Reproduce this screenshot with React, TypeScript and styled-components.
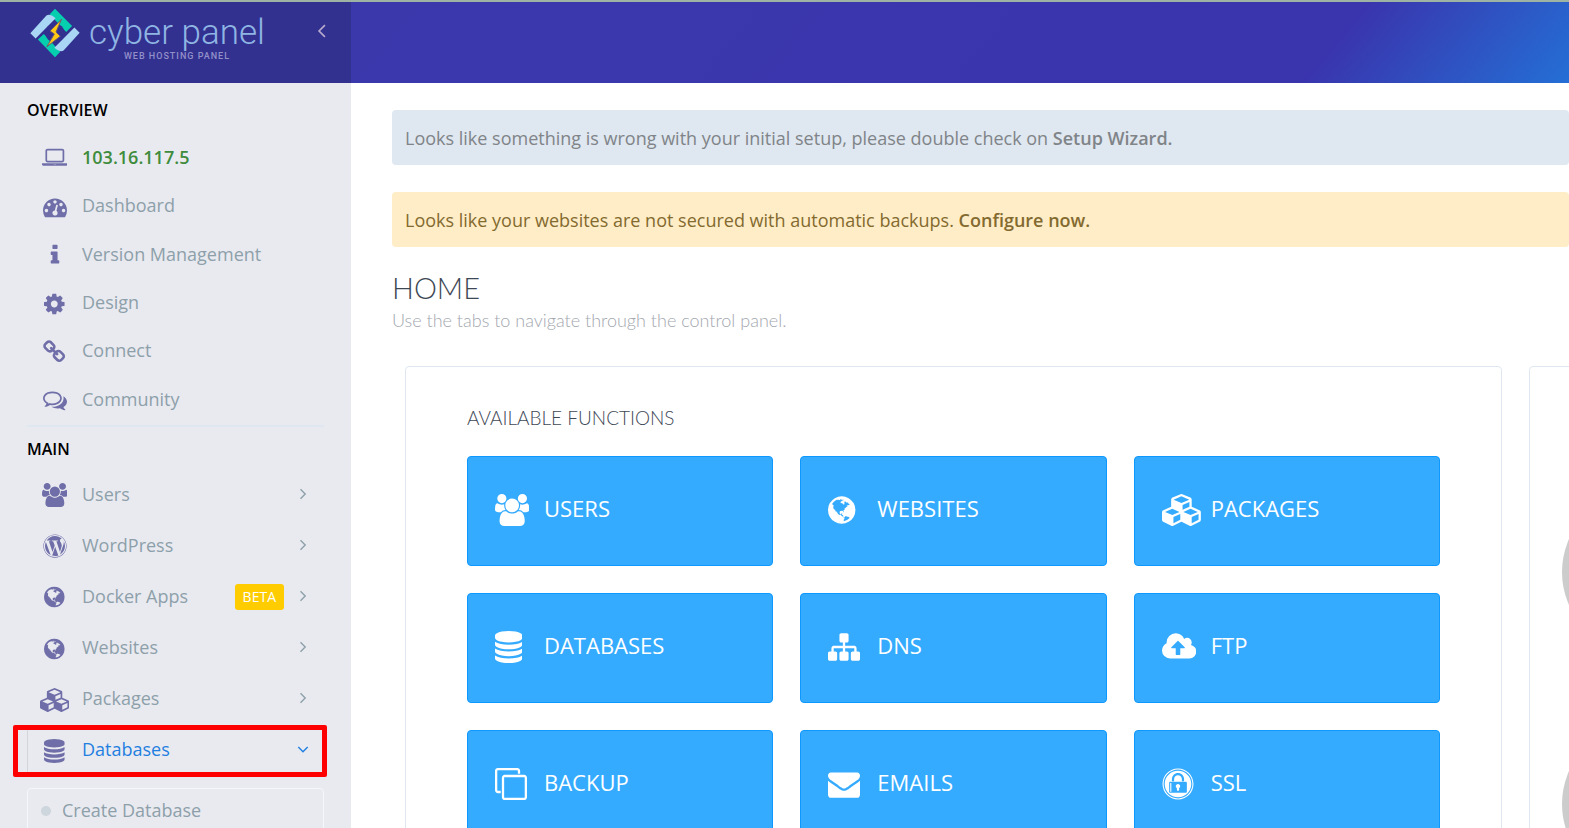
import React from "react";
import styled, { createGlobalStyle } from "styled-components";
import { FaWordpress, FaExpeditedssl } from "react-icons/fa";

const GlobalStyle = createGlobalStyle`
  * { box-sizing: border-box; }
  body {
    margin: 0;
    background: #fff;
    font-family: "Open Sans", "Noto Sans", sans-serif;
    font-size: 18px;
    color: #8da0aa;
    overflow: hidden;
  }
  ul, h1, h2, h3, p { margin: 0; padding: 0; font-weight: 400; }
  ul { list-style: none; }
  a { color: inherit; text-decoration: none; }
`;

type Shape = { box: string; d: string };

const shapes: Record<string, Shape> = {
  laptop: {
    box: "0 0 1920 1792",
    d: "M416 1152q-66 0-113-47t-47-113v-704q0-66 47-113t113-47h1088q66 0 113 47t47 113v704q0 66-47 113t-113 47h-1088zm-32-864v704q0 13 9.5 22.5t22.5 9.5h1088q13 0 22.5-9.5t9.5-22.5v-704q0-13-9.5-22.5t-22.5-9.5h-1088q-13 0-22.5 9.5t-9.5 22.5zm1376 928h160v96q0 40-47 68t-113 28h-1600q-66 0-113-28t-47-68v-96h1760zm-720 96q16 0 16-16t-16-16h-160q-16 0-16 16t16 16h160z",
  },
  dashboard: {
    box: "0 0 1792 1792",
    d: "M384 1152q0-53-37.5-90.5t-90.5-37.5-90.5 37.5-37.5 90.5 37.5 90.5 90.5 37.5 90.5-37.5 37.5-90.5zm192-448q0-53-37.5-90.5t-90.5-37.5-90.5 37.5-37.5 90.5 37.5 90.5 90.5 37.5 90.5-37.5 37.5-90.5zm428 481l101-382q6-26-7.5-48.5t-38.5-29.5-48 6.5-30 39.5l-101 382q-60 5-107 43.5t-63 98.5q-20 77 20 146t117 89 146-20 89-117q16-60-6-117t-72-91zm660-33q0-53-37.5-90.5t-90.5-37.5-90.5 37.5-37.5 90.5 37.5 90.5 90.5 37.5 90.5-37.5 37.5-90.5zm-640-640q0-53-37.5-90.5t-90.5-37.5-90.5 37.5-37.5 90.5 37.5 90.5 90.5 37.5 90.5-37.5 37.5-90.5zm448 192q0-53-37.5-90.5t-90.5-37.5-90.5 37.5-37.5 90.5 37.5 90.5 90.5 37.5 90.5-37.5 37.5-90.5zm320 448q0 261-141 483-19 29-54 29h-1402q-35 0-54-29-141-221-141-483 0-182 71-348t191-286 286-191 348-71 348 71 286 191 191 286 71 348z",
  },
  info: {
    box: "0 0 1792 1792",
    d: "M1216 1344v128q0 26-19 45t-45 19h-512q-26 0-45-19t-19-45v-128q0-26 19-45t45-19h64v-384h-64q-26 0-45-19t-19-45v-128q0-26 19-45t45-19h384q26 0 45 19t19 45v576h64q26 0 45 19t19 45zm-128-1152v192q0 26-19 45t-45 19h-256q-26 0-45-19t-19-45v-192q0-26 19-45t45-19h256q26 0 45 19t19 45z",
  },
  cog: {
    box: "128 0 1536 1792",
    d: "M1152 896q0-106-75-181t-181-75-181 75-75 181 75 181 181 75 181-75 75-181zm512-109v222q0 12-8 23t-20 13l-185 28q-19 54-39 91 35 50 107 138 10 12 10 25t-9 23q-27 37-99 108t-94 71q-12 0-26-9l-138-108q-44 23-91 38-16 136-29 186-7 28-36 28h-222q-14 0-24.5-8.5t-11.5-21.5l-28-184q-49-16-90-37l-141 107q-10 9-25 9-14 0-25-11-126-114-165-168-7-10-7-23 0-12 8-23 15-21 51-66.5t54-70.5q-27-50-41-99l-183-27q-13-2-21-12.5t-8-23.5v-222q0-12 8-23t19-13l186-28q14-46 39-92-40-57-107-138-10-12-10-24 0-10 9-23 26-36 98.5-107.5t94.5-71.5q13 0 26 10l138 107q44-23 91-38 16-136 29-186 7-28 36-28h222q14 0 24.5 8.5t11.5 21.5l28 184q49 16 90 37l142-107q9-9 24-9 13 0 25 10 129 119 165 170 7 8 7 22 0 12-8 23-15 21-51 66.5t-54 70.5q26 50 41 98l183 28q13 2 21 12.5t8 23.5z",
  },
  link: {
    box: "64 0 1664 1792",
    d: "M1520 1216q0-40-28-68l-208-208q-28-28-68-28-42 0-72 32 3 3 19 18.5t21.5 21.5 15 19 13 25.5 3.5 27.5q0 40-28 68t-68 28q-15 0-27.5-3.5t-25.5-13-19-15-21.5-21.5-18.5-19q-33 31-33 73 0 40 28 68l206 207q27 27 68 27 40 0 68-26l147-146q28-28 28-67zm-703-705q0-40-28-68l-206-207q-28-28-68-28-39 0-68 27l-147 146q-28 28-28 67 0 40 28 68l208 208q27 27 68 27 42 0 72-31-3-3-19-18.5t-21.5-21.5-15-19-13-25.5-3.5-27.5q0-40 28-68t68-28q15 0 27.5 3.5t25.5 13 19 15 21.5 21.5 18.5 19q33-31 33-73zm895 705q0 120-85 203l-147 146q-83 83-203 83-121 0-204-85l-206-207q-83-83-83-203 0-123 88-209l-88-88q-86 88-208 88-120 0-204-84l-208-208q-84-84-84-204t85-203l147-146q83-83 203-83 121 0 204 85l206 207q83 83 83 203 0 123-88 209l88 88q86-88 208-88 120 0 204 84l208 208q84 84 84 204z",
  },
  comments: {
    box: "0 0 1792 1792",
    d: "M704 384q-153 0-286 52t-211.5 141-78.5 191q0 82 53 158t149 132l97 56-35 84q34-20 62-39l44-31 53 10q78 14 153 14 153 0 286-52t211.5-141 78.5-191-78.5-191-211.5-141-286-52zm0-128q191 0 353.5 68.5t256.5 186.5 94 257-94 257-256.5 186.5-353.5 68.5q-86 0-176-16-124 88-278 128-36 9-86 16h-3q-11 0-20.5-8t-11.5-21q-1-3-1-6.5t.5-6.5 2-6l2.5-5 3.5-5.5 4-5 4.5-5 4-4.5q5-6 23-25t26-29.5 22.5-29 25-38.5 20.5-44q-124-72-195-177t-71-224q0-139 94-257t256.5-186.5 353.5-68.5zm822 1169q10 24 20.5 44t25 38.5 22.5 29 26 29.5 23 25q1 1 4 4.5t4.5 5 4 5 3.5 5.5l2.5 5 2 6 .5 6.5-1 6.5q-3 14-13 22t-22 7q-50-7-86-16-154-40-278-128-90 16-176 16-271 0-472-132 58 4 88 4 161 0 309-45t264-129q125-92 192-212t67-254q0-77-23-152 129 71 204 178t75 230q0 120-71 224.5t-195 176.5z",
  },
  users: {
    box: "64 0 1920 1792",
    d: "M657 896q-162 5-265 128h-134q-82 0-138-40.5t-56-118.5q0-353 124-353 6 0 43.5 21t97.5 42.5 119 21.5q67 0 133-23-5 37-5 66 0 139 81 256zm1071 637q0 120-73 189.5t-194 69.5h-874q-121 0-194-69.5t-73-189.5q0-53 3.5-103.5t14-109 26.5-108.5 43-97.5 62-81 85.5-53.5 111.5-20q10 0 43 21.5t73 48 107 48 135 21.5 135-21.5 107-48 73-48 43-21.5q61 0 111.5 20t85.5 53.5 62 81 43 97.5 26.5 108.5 14 109 3.5 103.5zm-1024-1277q0 106-75 181t-181 75-181-75-75-181 75-181 181-75 181 75 75 181zm704 384q0 159-112.5 271.5t-271.5 112.5-271.5-112.5-112.5-271.5 112.5-271.5 271.5-112.5 271.5 112.5 112.5 271.5zm576 225q0 78-56 118.5t-138 40.5h-134q-103-123-265-128 81-117 81-256 0-29-5-66 66 23 133 23 59 0 119-21.5t97.5-42.5 43.5-21q124 0 124 353zm-128-609q0 106-75 181t-181 75-181-75-75-181 75-181 181-75 181 75 75 181z",
  },
  globe: {
    box: "128 0 1536 1792",
    d: "M896 128q209 0 385.5 103t279.5 279.5 103 385.5-103 385.5-279.5 279.5-385.5 103-385.5-103-279.5-279.5-103-385.5 103-385.5 279.5-279.5 385.5-103zm274 521q-2 1-9.5 9.5t-13.5 9.5q2 0 4.5-5t5-11 3.5-7q6-7 22-15 14-6 52-12 34-8 51 11-2-2 9.5-13t14.5-12q3-2 15-4.5t15-7.5l2-22q-12 1-17.5-7t-6.5-21q0 2-6 8 0-7-4.5-8t-11.5 1-9 1q-10-3-15-7.5t-8-16.5-4-15q-2-5-9.5-11t-9.5-10q-1-2-2.5-5.5t-3-6.5-4-5.5-5.5-2.5-7 5-7.5 10-4.5 5q-3-2-6-1.5t-4.5 1-4.5 3-5 3.5q-3 2-8.5 3t-8.5 2q15-5-1-11-10-4-16-3 9-4 7.5-12t-8.5-14h5q-1-4-8.5-8.5t-17.5-8.5-13-6q-8-5-34-9.5t-33-.5q-5 6-4.5 10.5t4 14 3.5 12.5q1 6-5.5 13t-6.5 12q0 7 14 15.5t10 21.5q-3 8-16 16t-16 12q-5 8-1.5 18.5t10.5 16.5q2 2 1.5 4t-3.5 4.5-5.5 4-6.5 3.5l-3 2q-11 5-20.5-6t-13.5-26q-7-25-16-30-23-8-29 1-5-13-41-26-25-9-58-4 6-1 0-15-7-15-19-12 3-6 4-17.5t1-13.5q3-13 12-23 1-1 7-8.5t9.5-13.5.5-6q35 4 50-11 5-5 11.5-17t10.5-17q9-6 14-5.5t14.5 5.5 14.5 5q14 1 15.5-11t-7.5-20q12 1 3-17-4-7-8-9-12-4-27 5-8 4 2 8-1-1-9.5 10.5t-16.5 17.5-16-5q-1-1-5.5-13.5t-9.5-13.5q-8 0-16 15 3-8-11-15t-24-8q19-12-8-27-7-4-20.5-5t-19.5 4q-5 7-5.5 11.5t5 8 10.5 5.5 11.5 4 8.5 3q14 10 8 14-2 1-8.5 3.5t-11.5 4.5-6 4q-3 4 0 14t-2 14q-5-5-9-17.5t-7-16.5q7 9-25 6l-10-1q-4 0-16 2t-20.5 1-13.5-8q-4-8 0-20 1-4 4-2-4-3-11-9.5t-10-8.5q-46 15-94 41 6 1 12-1 5-2 13-6.5t10-5.5q34-14 42-7l5-5q14 16 20 25-7-4-30-1-20 6-22 12 7 12 5 18-4-3-11.5-10t-14.5-11-15-5q-16 0-22 1-146 80-235 222 7 7 12 8 4 1 5 9t2.5 11 11.5-3q9 8 3 19 1-1 44 27 19 17 21 21 3 11-10 18-1-2-9-9t-9-4q-3 5 .5 18.5t10.5 12.5q-7 0-9.5 16t-2.5 35.5-1 23.5l2 1q-3 12 5.5 34.5t21.5 19.5q-13 3 20 43 6 8 8 9 3 2 12 7.5t15 10 10 10.5q4 5 10 22.5t14 23.5q-2 6 9.5 20t10.5 23q-1 0-2.5 1t-2.5 1q3 7 15.5 14t15.5 13q1 3 2 10t3 11 8 2q2-20-24-62-15-25-17-29-3-5-5.5-15.5t-4.5-14.5q2 0 6 1.5t8.5 3.5 7.5 4 2 3q-3 7 2 17.5t12 18.5 17 19 12 13q6 6 14 19.5t0 13.5q9 0 20 10t17 20q5 8 8 26t5 24q2 7 8.5 13.5t12.5 9.5l16 8 13 7q5 2 18.5 10.5t21.5 11.5q10 4 16 4t14.5-2.5 13.5-3.5q15-2 29 15t21 21q36 19 55 11-2 1 .5 7.5t8 15.5 9 14.5 5.5 8.5q5 6 18 15t18 15q6-4 7-9-3 8 7 20t18 10q14-3 14-32-31 15-49-18 0-1-2.5-5.5t-4-8.5-2.5-8.5 0-7.5 5-3q9 0 10-3.5t-2-12.5-4-13q-1-8-11-20t-12-15q-5 9-16 8t-16-9q0 1-1.5 5.5t-1.5 6.5q-13 0-15-1 1-3 2.5-17.5t3.5-22.5q1-4 5.5-12t7.5-14.5 4-12.5-4.5-9.5-17.5-2.5q-19 1-26 20-1 3-3 10.5t-5 11.5-9 7q-7 3-24 2t-24-5q-13-8-22.5-29t-9.5-37q0-10 2.5-26.5t3-25-5.5-24.5q3-2 9-9.5t10-10.5q2-1 4.5-1.5t4.5 0 4-1.5 3-6q-1-1-4-3-3-3-4-3 7 3 28.5-1.5t27.5 1.5q15 11 22-2 0-1-2.5-9.5t-.5-13.5q5 27 29 9 3 3 15.5 5t17.5 5q3 2 7 5.5t5.5 4.5 5-.5 8.5-6.5q10 14 12 24 11 40 19 44 7 3 11 2t4.5-9.5 0-14-1.5-12.5l-1-8v-18l-1-8q-15-3-18.5-12t1.5-18.5 15-18.5q1-1 8-3.5t15.5-6.5 12.5-8q21-19 15-35 7 0 11-9-1 0-5-3t-7.5-5-4.5-2q9-5 2-16 5-3 7.5-11t7.5-10q9 12 21 2 8-8 1-16 5-7 20.5-10.5t18.5-9.5q7 2 8-2t1-12 3-12q4-5 15-9t13-5l17-11q3-4 0-4 18 2 31-11 10-11-6-20 3-6-3-9.5t-15-5.5q3-1 11.5-.5t10.5-1.5q15-10-7-16-17-5-43 12zm-163 877q206-36 351-189-3-3-12.5-4.5t-12.5-3.5q-18-7-24-8 1-7-2.5-13t-8-9-12.5-8-11-7q-2-2-7-6t-7-5.5-7.5-4.5-8.5-2-10 1l-3 1q-3 1-5.5 2.5t-5.5 3-4 3 0 2.5q-21-17-36-22-5-1-11-5.5t-10.5-7-10-1.5-11.5 7q-5 5-6 15t-2 13q-7-5 0-17.5t2-18.5q-3-6-10.5-4.5t-12 4.5-11.5 8.5-9 6.5-8.5 5.5-8.5 7.5q-3 4-6 12t-5 11q-2-4-11.5-6.5t-9.5-5.5q2 10 4 35t5 38q7 31-12 48-27 25-29 40-4 22 12 26 0 7-8 20.5t-7 21.5q0 6 2 16z",
  },
  cubes: {
    box: "0 0 2176 1792",
    d: "M640 1632l384-192v-314l-384 164v342zm-64-454l404-173-404-173-404 173zm1088 454l384-192v-314l-384 164v342zm-64-454l404-173-404-173-404 173zm-448-293l384-165v-266l-384 164v267zm-64-379l441-189-441-189-441 189zm1088 518v416q0 36-19 67t-52 47l-448 224q-25 14-57 14t-57-14l-448-224q-4-2-7-4-2 2-7 4l-448 224q-25 14-57 14t-57-14l-448-224q-33-16-52-47t-19-67v-416q0-38 21.5-70t56.5-48l434-186v-400q0-38 21.5-70t56.5-48l448-192q23-10 50-10t50 10l448 192q35 16 56.5 48t21.5 70v400l434 186q36 16 57 48t21 70z",
  },
  database: {
    box: "128 0 1536 1792",
    d: "M896 768q237 0 443-43t325-127v170q0 69-103 128t-280 93.5-385 34.5-385-34.5-280-93.5-103-128v-170q119 84 325 127t443 43zm0 768q237 0 443-43t325-127v170q0 69-103 128t-280 93.5-385 34.5-385-34.5-280-93.5-103-128v-170q119 84 325 127t443 43zm0-384q237 0 443-43t325-127v170q0 69-103 128t-280 93.5-385 34.5-385-34.5-280-93.5-103-128v-170q119 84 325 127t443 43zm0-1152q208 0 385 34.5t280 93.5 103 128v128q0 69-103 128t-280 93.5-385 34.5-385-34.5-280-93.5-103-128v-128q0-69 103-128t280-93.5 385-34.5z",
  },
  sitemap: {
    box: "0 0 1792 1792",
    d: "M1792 1248v320q0 40-28 68t-68 28h-320q-40 0-68-28t-28-68v-320q0-40 28-68t68-28h96v-192h-512v192h96q40 0 68 28t28 68v320q0 40-28 68t-68 28h-320q-40 0-68-28t-28-68v-320q0-40 28-68t68-28h96v-192h-512v192h96q40 0 68 28t28 68v320q0 40-28 68t-68 28h-320q-40 0-68-28t-28-68v-320q0-40 28-68t68-28h96v-192q0-52 38-90t90-38h512v-192h-96q-40 0-68-28t-28-68v-320q0-40 28-68t68-28h320q40 0 68 28t28 68v320q0 40-28 68t-68 28h-96v192h512q52 0 90 38t38 90v192h96q40 0 68 28t28 68z",
  },
  cloud: {
    box: "0 0 1920 1792",
    d: "M1280 928q0-14-9-23l-352-352q-9-9-23-9t-23 9l-351 351q-10 12-10 24 0 14 9 23t23 9h224v352q0 13 9.5 22.5t22.5 9.5h192q13 0 22.5-9.5t9.5-22.5v-352h224q13 0 22.5-9.5t9.5-22.5zm640 224q0 159-112.5 271.5t-271.5 112.5h-1088q-185 0-316.5-131.5t-131.5-316.5q0-130 70-240t188-165q-2-30-2-43 0-212 150-362t362-150q156 0 285.5 87t188.5 231q71-62 166-62 106 0 181 75t75 181q0 76-41 138 130 31 213.5 135.5t83.5 238.5z",
  },
  envelope: {
    box: "0 0 1792 1792",
    d: "M1792 710v794q0 66-47 113t-113 47h-1472q-66 0-113-47t-47-113v-794q44 49 101 87 362 246 497 345 57 42 92.5 65.5t94.5 48 110 24.5h2q51 0 110-24.5t94.5-48 92.5-65.5q170-123 498-345 57-39 100-87zm0-294q0 79-49 151t-122 123q-376 261-468 325-10 7-42.5 31t-54 38.5-52 32.5-57.5 27-50 9h-2q-23 0-50-9t-57.5-27-52-32.5-54-38.5-42.5-31q-91-64-262-182.5t-205-142.5q-62-42-117-115.5t-55-136.5q0-78 41.5-130t118.5-52h1472q65 0 112.5 47t47.5 113z",
  },
  clone: {
    box: "0 0 1792 1792",
    d: "M1664 1632v-1088q0-13-9.5-22.5t-22.5-9.5h-1088q-13 0-22.5 9.5t-9.5 22.5v1088q0 13 9.5 22.5t22.5 9.5h1088q13 0 22.5-9.5t9.5-22.5zm128-1088v1088q0 66-47 113t-113 47h-1088q-66 0-113-47t-47-113v-1088q0-66 47-113t113-47h1088q66 0 113 47t47 113zm-384-384v160h-128v-160q0-13-9.5-22.5t-22.5-9.5h-1088q-13 0-22.5 9.5t-9.5 22.5v1088q0 13 9.5 22.5t22.5 9.5h160v128h-160q-66 0-113-47t-47-113v-1088q0-66 47-113t113-47h1088q66 0 113 47t47 113z",
  },
};

function Glyph({ name }: { name: string }) {
  if (name === "wordpress") return <FaWordpress aria-hidden />;
  if (name === "ssl") return <FaExpeditedssl aria-hidden />;
  const s = shapes[name];
  return (
    <svg viewBox={s.box} fill="currentColor" aria-hidden>
      <path d={s.d} />
    </svg>
  );
}

const Page = styled.div`
  display: grid;
  grid-template-columns: 351px minmax(0, 1fr);
  height: 100vh;
  overflow: hidden;
  border-top: 2px solid #9fb3a4;
`;

const Sidebar = styled.aside`
  background: #e9eaf0;
  overflow: hidden;
`;

const Brand = styled.div`
  display: flex;
  align-items: flex-start;
  height: 81px;
  padding: 6px 22px 0 30px;
  background: #323190;
`;

const Logo = styled.a`
  display: flex;
  flex: 1;
  gap: 9px;
  svg { width: 50px; height: 50px; }
`;

const Wordmark = styled.span`
  display: flex;
  flex-direction: column;
  align-items: center;
`;

const BrandName = styled.span`
  height: 44px;
  font: 300 35px/50px Roboto, sans-serif;
  color: #8fb5e3;
`;

const BrandNote = styled.span`
  font: 500 9px/9px Roboto, sans-serif;
  letter-spacing: 1px;
  color: #938fc9;
`;

const Collapse = styled.button`
  display: flex;
  margin-top: 16px;
  padding: 0;
  border: 0;
  background: none;
  color: #b9abce;
`;

const Nav = styled.nav`
  padding: 0 27px;
`;

const NavHeading = styled.h2`
  padding-top: 14px;
  font-size: 16px;
  font-weight: 600;
  line-height: 26px;
  color: #000;
`;

const NavList = styled.ul<{ $height: number }>`
  display: grid;
  grid-auto-rows: 1fr;
  height: ${(p) => p.$height}px;
`;

const OverviewList = styled(NavList)`
  margin-top: 10px;
`;

const MainList = styled(NavList)`
  margin-top: 6px;
`;

const Divider = styled.hr`
  height: 2px;
  margin: 2px 0 -5px;
  border: 0;
  background: #dfe8f1;
`;

const NavLink = styled.a<{ $tone?: "host" | "open" }>`
  display: flex;
  align-items: center;
  height: 100%;
  padding-right: 15px;
  color: ${(p) => (p.$tone === "host" ? "#3f8c3d" : p.$tone === "open" ? "#1f7fe0" : "#8da0aa")};
  font-weight: ${(p) => (p.$tone === "host" ? 600 : 400)};
`;

const NavIcon = styled.span`
  display: flex;
  justify-content: center;
  width: 55px;
  padding-top: 3px;
  color: #6f6ea8;
  svg { height: 24px; width: auto; flex: none; }
`;

const NavText = styled.span`
  flex: 1;
`;

const Badge = styled.span`
  margin: 3px 13px 0 0;
  padding: 0 8px;
  border-radius: 3px;
  background: #fc0;
  color: #fff;
  font-size: 14px;
  line-height: 26px;
`;

const OpenItem = styled.li`
  position: relative;
  border-left: 1px solid #d3d5dd;
  margin: 3px 0;
  ${NavLink} { margin-left: -1px; }
`;

const Highlight = styled.span`
  position: absolute;
  inset: -2px -3px -5px -15px;
  border: 5px solid #f00;
  border-radius: 2px;
  pointer-events: none;
`;

const Submenu = styled.ul`
  margin-top: 13px;
  padding: 0 13px;
  border: 1px solid #f6f7fa;
  border-radius: 4px;
`;

const SubLink = styled.a`
  display: flex;
  align-items: center;
  gap: 11px;
  line-height: 43px;
  &::before {
    content: "";
    width: 10px;
    height: 10px;
    border-radius: 50%;
    background: #cdd5dd;
  }
`;

const Main = styled.div`
  overflow: hidden;
`;

const TopBar = styled.header`
  height: 81px;
  background: linear-gradient(130deg, #3b38ac, #3a34ad 79%, #246fd5);
`;

const Content = styled.main`
  padding: 27px 0 0 41px;
`;

const Alert = styled.p<{ $warn?: boolean }>`
  margin-bottom: 27px;
  padding: 2px 13px 0;
  border-radius: 4px;
  line-height: 53px;
  background: ${(p) => (p.$warn ? "#ffedc7" : "#dfe7f0")};
  color: ${(p) => (p.$warn ? "#836a2f" : "#808488")};
  a { font-weight: 600; }
`;

const Title = styled.h1`
  font: 300 29px/28px Lato, sans-serif;
  color: #3e4855;
`;

const Tagline = styled.p`
  padding-top: 4px;
  font: 300 18px/28px Lato, sans-serif;
  color: #a3a7af;
`;

const Panels = styled.div`
  display: grid;
  grid-template-columns: minmax(0, 1fr) 400px;
  gap: 27px;
  margin: 32px -360px 0 13px;
`;

const Panel = styled.section`
  border: 1px solid #dfe8f1;
  border-radius: 4px;
`;

const FunctionPanel = styled(Panel)`
  padding: 37px 61px;
`;

const GaugePanel = styled(Panel)`
  display: grid;
  align-content: start;
  gap: 70px;
  padding: 124px 32px;
`;

const Gauge = styled.svg`
  width: 162px;
  height: 162px;
`;

const PanelTitle = styled.h3`
  margin-bottom: 24px;
  font: 300 19px/28px Lato, sans-serif;
  color: #3e4855;
`;

const Tiles = styled.div`
  display: grid;
  grid-template-columns: repeat(3, minmax(0, 1fr));
  grid-auto-rows: 110px;
  gap: 27px;
`;

const Tile = styled.a`
  display: flex;
  align-items: center;
  padding: 0 27px 6px;
  border: 1px solid #0e97ff;
  border-radius: 4px;
  background: #35abff;
  color: #fff;
  font-size: 22px;
`;

const TileIcon = styled.span`
  display: flex;
  width: 49px;
  padding-top: 4px;
  svg { height: 32px; width: auto; flex: none; }
`;

const Chevron = ({ turn, size }: { turn: "left" | "right" | "down"; size: number }) => (
  <svg width={size} height={size} viewBox="0 0 12 12" fill="none" stroke="currentColor" strokeWidth="1.4" aria-hidden>
    <path d={{ left: "M8.5 1L3.5 6l5 5", right: "M3.5 1.3l4.7 4.7-4.7 4.7", down: "M1.3 4l4.7 4.7L10.7 4" }[turn]} />
  </svg>
);

const overview = [
  ["laptop", "103.16.117.5"],
  ["dashboard", "Dashboard"],
  ["info", "Version Management"],
  ["cog", "Design"],
  ["link", "Connect"],
  ["comments", "Community"],
];

const sections = [
  ["users", "Users"],
  ["wordpress", "WordPress"],
  ["globe", "Docker Apps"],
  ["globe", "Websites"],
  ["cubes", "Packages"],
];

const tiles = [
  ["users", "USERS"],
  ["globe", "WEBSITES"],
  ["cubes", "PACKAGES"],
  ["database", "DATABASES"],
  ["sitemap", "DNS"],
  ["cloud", "FTP"],
  ["clone", "BACKUP"],
  ["envelope", "EMAILS"],
  ["ssl", "SSL"],
];

const LogoMark = () => (
  <svg viewBox="12 11 152 152" aria-hidden>
    <path d="M88 13L140 66L122 84L72 30Z M88 161L36 107L54 90L104 144Z" fill="#06cfb0" />
    <path d="M13 88L62 34Q72 27 90 42L29 104Z M163 86L114 140Q104 147 86 132L147 70Z" fill="#a9d6f5" />
    <circle cx="88" cy="87" r="29" fill="#323190" />
    <path d="M108 45L73 81L86 90L63 129L104 97L91 84Z" fill="#ffc914" stroke="#6a5a6e" strokeWidth="3" strokeLinejoin="round" />
  </svg>
);

export default function App() {
  return (
    <Page>
      <GlobalStyle />
      <Sidebar>
        <Brand>
          <Logo href="#">
            <LogoMark />
            <Wordmark>
              <BrandName>cyber panel</BrandName>
              <BrandNote>WEB HOSTING PANEL</BrandNote>
            </Wordmark>
          </Logo>
          <Collapse type="button" aria-label="Collapse sidebar">
            <Chevron turn="left" size={14} />
          </Collapse>
        </Brand>
        <Nav>
          <NavHeading>OVERVIEW</NavHeading>
          <OverviewList $height={290}>
            {overview.map(([icon, label], i) => (
              <li key={label}>
                <NavLink href="#" $tone={i === 0 ? "host" : undefined}>
                  <NavIcon><Glyph name={icon} /></NavIcon>
                  <NavText>{label}</NavText>
                </NavLink>
              </li>
            ))}
          </OverviewList>
          <Divider />
          <NavHeading>MAIN</NavHeading>
          <MainList $height={307}>
            {sections.map(([icon, label]) => (
              <li key={label}>
                <NavLink href="#">
                  <NavIcon><Glyph name={icon} /></NavIcon>
                  <NavText>{label}</NavText>
                  {label === "Docker Apps" && <Badge>BETA</Badge>}
                  <Chevron turn="right" size={12} />
                </NavLink>
              </li>
            ))}
            <OpenItem>
              <NavLink href="#" $tone="open">
                <NavIcon><Glyph name="database" /></NavIcon>
                <NavText>Databases</NavText>
                <Chevron turn="down" size={12} />
              </NavLink>
              <Highlight />
            </OpenItem>
          </MainList>
          <Submenu>
            <li><SubLink href="#">Create Database</SubLink></li>
          </Submenu>
        </Nav>
      </Sidebar>
      <Main>
        <TopBar />
        <Content>
          <Alert>
            Looks like something is wrong with your initial setup, please double check on <a href="#">Setup Wizard.</a>
          </Alert>
          <Alert $warn>
            Looks like your websites are not secured with automatic backups. <a href="#">Configure now.</a>
          </Alert>
          <Title>HOME</Title>
          <Tagline>Use the tabs to navigate through the control panel.</Tagline>
          <Panels>
            <FunctionPanel>
              <PanelTitle>AVAILABLE FUNCTIONS</PanelTitle>
              <Tiles>
                {tiles.map(([icon, label]) => (
                  <Tile href="#" key={label}>
                    <TileIcon><Glyph name={icon} /></TileIcon>
                    {label}
                  </Tile>
                ))}
              </Tiles>
            </FunctionPanel>
            <GaugePanel>
              {["cpu", "ram"].map((k) => (
                <Gauge key={k} viewBox="0 0 162 162" aria-hidden>
                  <circle cx="81" cy="81" r="72" fill="none" stroke="#ccc" strokeWidth="18" />
                </Gauge>
              ))}
            </GaugePanel>
          </Panels>
        </Content>
      </Main>
    </Page>
  );
}
